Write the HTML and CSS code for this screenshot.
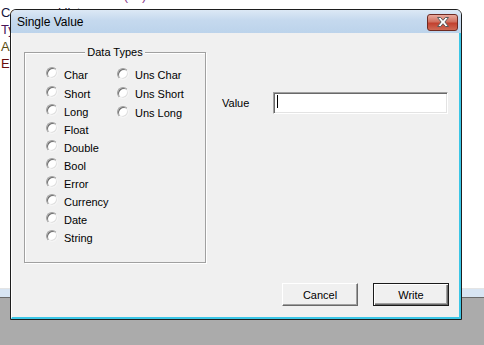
FILE: index.html
```html
<!DOCTYPE html>
<html lang="en">
<head>
    <meta charset="UTF-8">
    <title>Single Value</title>
    <link rel="stylesheet" href="styles.css">
</head>
<body>
    <!-- Page behind the dialog -->
    <div class="desk">
        <div class="doc">
            <p class="ln ln-top">Connected to Server (v2)</p>
            <p class="ln ln-c">Command list</p>
            <p class="ln ln-t">Type of item</p>
            <p class="ln ln-a">Address</p>
            <p class="ln ln-e">Error</p>
        </div>
        <div class="strip"></div>
    </div>

    <!-- Dialog window -->
    <div class="dialog">
        <div class="titlebar">
            <span class="title">Single Value</span>
            <button class="close" aria-label="Close">
                <svg width="12" height="10" viewBox="0 0 12 10">
                    <path d="M0.5 0.5H3.6L6 3.3L8.4 0.5H11.5L7.9 5L11.5 9.5H8.4L6 6.7L3.6 9.5H0.5L4.1 5Z" fill="#fff" stroke="#5a5a5a" stroke-width="1" stroke-linejoin="round"/>
                </svg>
            </button>
        </div>
        <div class="client">
            <div class="top">
                <div class="group">
                    <span class="group-title">Data Types</span>
                    <div class="cols">
                        <div class="col col-a">
                            <label class="opt"><span class="radio"></span><span class="opt-label">Char</span></label>
                            <label class="opt"><span class="radio"></span><span class="opt-label">Short</span></label>
                            <label class="opt"><span class="radio"></span><span class="opt-label">Long</span></label>
                            <label class="opt"><span class="radio"></span><span class="opt-label">Float</span></label>
                            <label class="opt"><span class="radio"></span><span class="opt-label">Double</span></label>
                            <label class="opt"><span class="radio"></span><span class="opt-label">Bool</span></label>
                            <label class="opt"><span class="radio"></span><span class="opt-label">Error</span></label>
                            <label class="opt"><span class="radio"></span><span class="opt-label">Currency</span></label>
                            <label class="opt"><span class="radio"></span><span class="opt-label">Date</span></label>
                            <label class="opt"><span class="radio"></span><span class="opt-label">String</span></label>
                        </div>
                        <div class="col col-b">
                            <label class="opt"><span class="radio"></span><span class="opt-label">Uns Char</span></label>
                            <label class="opt"><span class="radio"></span><span class="opt-label">Uns Short</span></label>
                            <label class="opt"><span class="radio"></span><span class="opt-label">Uns Long</span></label>
                        </div>
                    </div>
                </div>
                <div class="value-row">
                    <span class="value-label">Value</span>
                    <div class="field"><span class="caret"></span></div>
                </div>
            </div>
            <div class="buttons">
                <button class="btn">Cancel</button>
                <button class="btn btn-default">Write</button>
            </div>
        </div>
    </div>
</body>
</html>
```

FILE: styles.css
```css
body {
    margin: 0;
    width: 484px;
    height: 345px;
    overflow: hidden;
    position: relative;
    background-color: #ababab;
    font-family: "Liberation Sans", Arial, sans-serif;
}

/* page behind */
.doc {
    height: 288px;
    background: #fff;
    border-bottom: 1px solid #e4e4e4;
    overflow: hidden;
}
.ln {
    margin: 0;
    padding-left: 1px;
    font-size: 13px;
    line-height: 17px;
    white-space: nowrap;
}
.ln-top {
    margin-top: -13px;
    color: #8a3a8a;
}
.ln-c { color: #14143c; }
.ln-t { color: #4a1658; }
.ln-a { color: #5a4a10; }
.ln-e { color: #6a0c0c; }
.strip {
    height: 8px;
    background: #d8e5f3;
    border-bottom: 1px solid #6a6a6a;
}

/* dialog */
.dialog {
    position: absolute;
    left: 10px;
    top: 9px;
    width: 452px;
    height: 311px;
    box-sizing: border-box;
    border: 1px solid #1e1e1e;
    border-radius: 6px 6px 0 0;
    background: #f0f0f0;
    display: flex;
    flex-direction: column;
    overflow: hidden;
}
.titlebar {
    height: 23px;
    flex: none;
    display: flex;
    align-items: center;
    justify-content: space-between;
    padding: 0 3px 0 6px;
    background: linear-gradient(#dce8f5, #c5d9ee 45%, #bcd3eb);
}
.title {
    font-size: 12px;
    color: #000;
    margin-top: 1px;
}
.close {
    width: 31px;
    height: 17px;
    margin-top: 1px;
    padding: 0;
    display: flex;
    align-items: center;
    justify-content: center;
    border: 1px solid #6e2a22;
    border-radius: 3px;
    background: linear-gradient(#e9a99c, #d0705f 45%, #c2412f 55%, #cf6a55);
}

.client {
    flex: 1;
    display: flex;
    flex-direction: column;
    padding: 19px 10px 11px 12px;
    border-left: 1px solid #fff;
    border-right: 2px solid #3bc6e6;
    border-bottom: 2px solid #3bc6e6;
    font-size: 11px;
    color: #000;
}
.top {
    display: flex;
    align-items: flex-start;
}

/* group box */
.group {
    width: 182px;
    height: 211px;
    box-sizing: border-box;
    border: 1px solid #a0a0a0;
    box-shadow: inset 1px 1px #fff, 1px 1px #fff;
}
.group-title {
    display: block;
    width: max-content;
    margin: -7px auto 0;
    padding: 0 2px;
    line-height: 13px;
    background: #f0f0f0;
}
.cols {
    display: flex;
    padding-left: 21px;
}
.col-a {
    width: 71px;
    margin-top: 4px;
}
.col-b {
    margin-top: 5px;
}
.opt {
    display: flex;
    align-items: center;
    gap: 6px;
    height: 18px;
}
.col-a .opt:first-child {
    height: 20px;
}
.col-b .opt {
    height: 19px;
}
.radio {
    width: 12px;
    height: 12px;
    flex: none;
    box-sizing: border-box;
    border-radius: 50%;
    border: 1px solid;
    border-color: #a0a0a0 #f4f4f4 #f4f4f4 #a0a0a0;
    box-shadow: inset 1px 1px #6d6d6d, inset -1px -1px #e0e0e0;
    background: #fff;
}
.opt-label {
    line-height: 13px;
    margin-top: 4px;
    white-space: nowrap;
}

/* value field */
.value-row {
    display: flex;
    align-items: center;
    margin: 40px 0 0 16px;
}
.value-label {
    width: 51px;
    line-height: 22px;
}
.field {
    width: 175px;
    height: 22px;
    box-sizing: border-box;
    background: #fff;
    border: 1px solid;
    border-color: #a0a0a0 #fff #fff #a0a0a0;
    box-shadow: inset 1px 1px #696969, inset -1px -1px #e3e3e3;
}
.caret {
    display: block;
    width: 1px;
    height: 13px;
    margin: 2px 0 0 3px;
    background: #000;
}

/* buttons */
.buttons {
    margin-top: auto;
    display: flex;
    justify-content: flex-end;
    gap: 15px;
}
.btn {
    width: 76px;
    height: 23px;
    padding: 0;
    box-sizing: border-box;
    background: #f0f0f0;
    border: 1px solid;
    border-color: #fff #696969 #696969 #fff;
    box-shadow: inset -1px -1px #a0a0a0;
    font-family: "Liberation Sans", Arial, sans-serif;
    font-size: 11px;
    color: #000;
}
.btn-default {
    border-color: #1a1a1a;
    box-shadow: inset 1px 1px #fff, inset -1px -1px #696969, inset -2px -2px #a0a0a0;
}
```
